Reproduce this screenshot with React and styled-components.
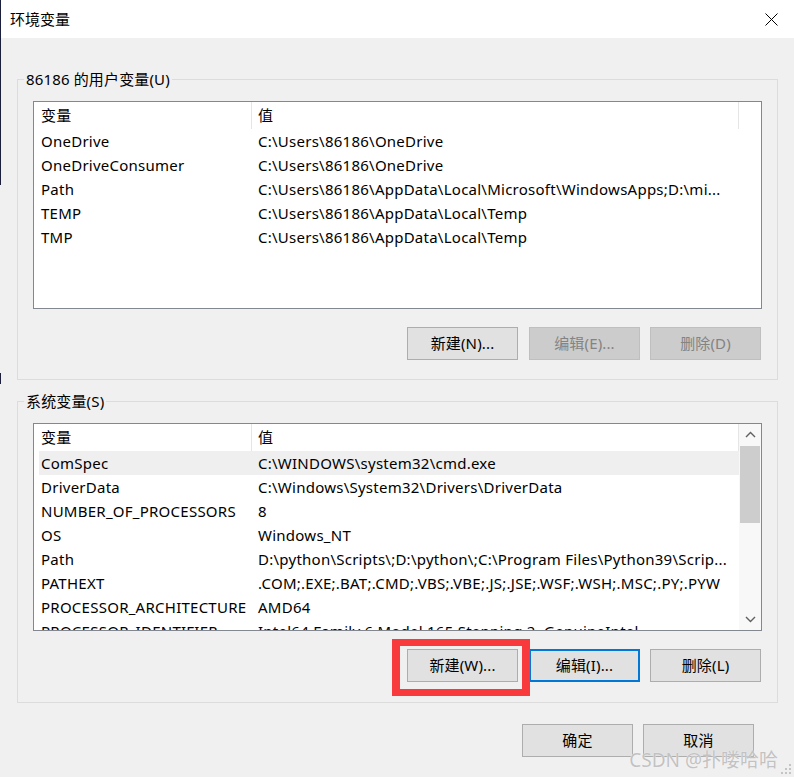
import React from "react";
import styled, { createGlobalStyle, css } from "styled-components";

const GlobalStyle = createGlobalStyle`
  html, body { margin: 0; padding: 0; }
  body {
    width: 794px;
    height: 777px;
    overflow: hidden;
    background: linear-gradient(to bottom,
      #1c1f3b 0, #1c1f3b 185px,
      #f0f0f0 185px, #f0f0f0 373px,
      #1c1f3b 373px, #1c1f3b 384px,
      #f0f0f0 384px);
    font-family: "Segoe UI", "Noto Sans", "Noto Sans CJK SC", sans-serif;
  }
`;

const Window = styled.div`
  position: relative;
  margin-left: 1px;
  width: 793px;
  height: 777px;
  background: #f0f0f0;
  display: flex;
  flex-direction: column;
  font-size: 15px;
  color: #000;
`;

const TitleBar = styled.div`
  height: 38px;
  flex-shrink: 0;
  background: #fff;
  display: flex;
  align-items: center;
  justify-content: space-between;
  padding-left: 9px;
`;

const Title = styled.span`
  line-height: 20px;
`;

const CloseButton = styled.div`
  width: 46px;
  height: 38px;
  display: flex;
  align-items: center;
  justify-content: center;
`;

const Content = styled.div`
  padding: 31px 16px 0;
  display: flex;
  flex-direction: column;
`;

const GroupBox = styled.fieldset`
  margin: ${(p) => p.$mt}px 0 0;
  padding: 12px 15px ${(p) => p.$pb}px;
  border: 1px solid #dcdcdc;
  min-width: 0;
`;

const Legend = styled.legend`
  padding: 0 2px;
  margin-left: -9px;
  line-height: 20px;
  font-size: 15px;
  letter-spacing: 0.15px;
`;

const List = styled.div`
  box-sizing: border-box;
  height: 208px;
  border: 1px solid #828790;
  background: #fff;
  display: flex;
  overflow: hidden;
`;

const ListContent = styled.div`
  flex: 1;
  min-width: 0;
  display: flex;
  flex-direction: column;
  overflow: hidden;
  letter-spacing: 0.25px;
`;

const Header = styled.div`
  display: flex;
  height: 27px;
  flex-shrink: 0;
`;

const HeaderCell = styled.div`
  box-sizing: border-box;
  width: ${(p) => p.$w}px;
  padding-left: ${(p) => p.$pl}px;
  border-right: 1px solid #e5e5e5;
  line-height: 27px;
  white-space: nowrap;
`;

const Row = styled.div`
  display: flex;
  height: 24px;
  flex-shrink: 0;
  margin-left: 5px;
  line-height: 24px;
  background: ${(p) => (p.$selected ? "#efefef" : "transparent")};
`;

const NameCell = styled.div`
  box-sizing: border-box;
  width: 213px;
  flex-shrink: 0;
  padding-left: 2px;
  white-space: nowrap;
  overflow: hidden;
`;

const ValueCell = styled.div`
  flex: 1;
  min-width: 0;
  padding-left: 6px;
  white-space: nowrap;
  overflow: hidden;
`;

const Scrollbar = styled.div`
  width: 22px;
  flex-shrink: 0;
  background: #f8f8f8;
  display: flex;
  flex-direction: column;
`;

const ScrollArrow = styled.div`
  height: 21px;
  flex-shrink: 0;
  display: flex;
  align-items: center;
  justify-content: center;
`;

const Track = styled.div`
  flex: 1;
  display: flex;
  flex-direction: column;
`;

const Thumb = styled.div`
  height: 77px;
  margin: 1px 1px 0;
  background: #cdcdcd;
`;

const ButtonRow = styled.div`
  display: flex;
  justify-content: flex-end;
  gap: 10px;
  margin-top: 18px;
  padding-right: 1px;
`;

const Footer = styled.div`
  display: flex;
  justify-content: flex-end;
  gap: 10px;
  margin-top: 21px;
  padding-right: 24px;
`;

const Button = styled.button`
  box-sizing: border-box;
  width: 111px;
  height: 33px;
  padding: 0 0 1px;
  margin: 0 ${(p) => p.$mr || 0}px 0 0;
  background: #e1e1e1;
  border: 1px solid #adadad;
  color: #000;
  font-family: inherit;
  font-size: 15px;
  line-height: 20px;
  letter-spacing: 0.15px;
  ${(p) =>
    p.$disabled &&
    css`
      background: #cccccc;
      border-color: #bfbfbf;
      color: #838383;
    `}
  ${(p) =>
    p.$focused &&
    css`
      border: 2px solid #0078d7;
    `}
`;

const HighlightWrap = styled.div`
  position: relative;
  display: flex;
  margin-right: 1px;
`;

const RedBox = styled.div`
  position: absolute;
  left: -15px;
  top: -10px;
  width: 138px;
  height: 57px;
  box-sizing: border-box;
  border-style: solid;
  border-color: #f93a3c;
  border-width: 7px 8px;
  pointer-events: none;
`;

const Watermark = styled.div`
  position: absolute;
  right: 16px;
  bottom: 5px;
  font-size: 19px;
  line-height: 24px;
  color: #c2c2c2;
  text-shadow: 0 0 1px #ffffff;
  white-space: nowrap;
`;

const Grip = styled.svg`
  position: absolute;
  right: 2px;
  bottom: 2px;
`;

const userVars = [
  ["OneDrive", "C:\\Users\\86186\\OneDrive"],
  ["OneDriveConsumer", "C:\\Users\\86186\\OneDrive"],
  ["Path", "C:\\Users\\86186\\AppData\\Local\\Microsoft\\WindowsApps;D:\\mi..."],
  ["TEMP", "C:\\Users\\86186\\AppData\\Local\\Temp"],
  ["TMP", "C:\\Users\\86186\\AppData\\Local\\Temp"],
];

const sysVars = [
  ["ComSpec", "C:\\WINDOWS\\system32\\cmd.exe"],
  ["DriverData", "C:\\Windows\\System32\\Drivers\\DriverData"],
  ["NUMBER_OF_PROCESSORS", "8"],
  ["OS", "Windows_NT"],
  ["Path", "D:\\python\\Scripts\\;D:\\python\\;C:\\Program Files\\Python39\\Scrip..."],
  ["PATHEXT", ".COM;.EXE;.BAT;.CMD;.VBS;.VBE;.JS;.JSE;.WSF;.WSH;.MSC;.PY;.PYW"],
  ["PROCESSOR_ARCHITECTURE", "AMD64"],
  ["PROCESSOR_IDENTIFIER", "Intel64 Family 6 Model 165 Stepping 2, GenuineIntel"],
];

function Chevron({ up }) {
  return (
    <svg width="11" height="7" viewBox="0 0 11 7">
      <polyline
        points={up ? "1,6 5.5,1.5 10,6" : "1,1 5.5,5.5 10,1"}
        fill="none"
        stroke="#606060"
        strokeWidth="1.4"
      />
    </svg>
  );
}

function VarList({ rows, scroll, selectedIndex }) {
  return (
    <List>
      <ListContent>
        <Header>
          <HeaderCell $w={218} $pl={7}>变量</HeaderCell>
          <HeaderCell $w={487} $pl={6}>值</HeaderCell>
        </Header>
        {rows.map(([name, value], i) => (
          <Row key={name + i} $selected={i === selectedIndex}>
            <NameCell>{name}</NameCell>
            <ValueCell>{value}</ValueCell>
          </Row>
        ))}
      </ListContent>
      {scroll && (
        <Scrollbar>
          <ScrollArrow>
            <Chevron up />
          </ScrollArrow>
          <Track>
            <Thumb />
          </Track>
          <ScrollArrow>
            <Chevron />
          </ScrollArrow>
        </Scrollbar>
      )}
    </List>
  );
}

export default function App() {
  return (
    <>
      <GlobalStyle />
      <Window>
        <TitleBar>
          <Title>环境变量</Title>
          <CloseButton>
            <svg width="13" height="13" viewBox="0 0 13 13">
              <path d="M0.5 0.5 L12.5 12.5 M12.5 0.5 L0.5 12.5" stroke="#000" strokeWidth="1" />
            </svg>
          </CloseButton>
        </TitleBar>
        <Content>
          <GroupBox $mt={0} $pb={19}>
            <Legend>86186 的用户变量(U)</Legend>
            <VarList rows={userVars} />
            <ButtonRow>
              <Button $mr={1}>新建(N)...</Button>
              <Button $disabled>编辑(E)...</Button>
              <Button $disabled>删除(D)</Button>
            </ButtonRow>
          </GroupBox>
          <GroupBox $mt={11} $pb={20}>
            <Legend>系统变量(S)</Legend>
            <VarList rows={sysVars} scroll selectedIndex={0} />
            <ButtonRow>
              <HighlightWrap>
                <Button>新建(W)...</Button>
                <RedBox />
              </HighlightWrap>
              <Button $focused>编辑(I)...</Button>
              <Button>删除(L)</Button>
            </ButtonRow>
          </GroupBox>
          <Footer>
            <Button>确定</Button>
            <Button>取消</Button>
          </Footer>
        </Content>
        <Watermark>CSDN @扑喽哈哈</Watermark>
        <Grip width="12" height="12" viewBox="0 0 12 12">
          {[
            [10, 2], [10, 6], [6, 6], [10, 10], [6, 10], [2, 10],
          ].map(([x, y]) => (
            <rect key={x + "-" + y} x={x - 1} y={y - 1} width="2" height="2" fill="#c4c4c4" />
          ))}
        </Grip>
      </Window>
    </>
  );
}
